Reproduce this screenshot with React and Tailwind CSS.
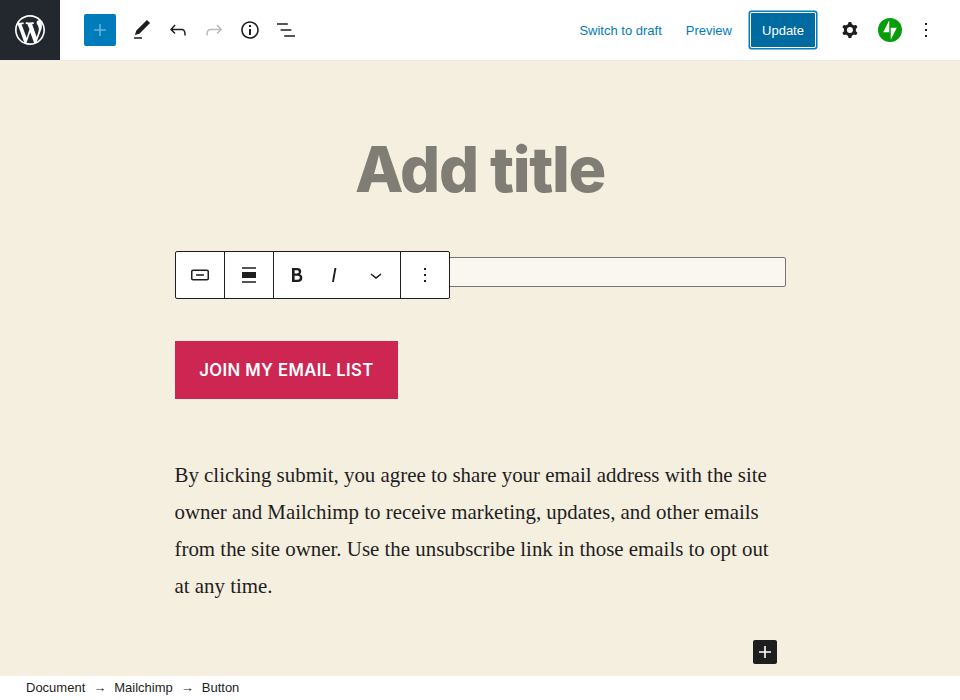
const ICONS = {
  wordpress:
    "M20 10c0-5.51-4.49-10-10-10C4.48 0 0 4.49 0 10c0 5.52 4.48 10 10 10 5.51 0 10-4.48 10-10zM7.78 15.37L4.37 6.22c.55-.02 1.17-.08 1.17-.08.5-.06.44-1.13-.06-1.11 0 0-1.45.11-2.37.11-.18 0-.37 0-.58-.01C4.12 2.69 6.87 1.11 10 1.11c2.33 0 4.45.87 6.05 2.34-.68-.11-1.65.39-1.65 1.58 0 .74.45 1.36.9 2.1.35.61.55 1.36.55 2.46 0 1.49-1.4 5-1.4 5l-3.03-8.37c.54-.02.82-.17.82-.17.5-.05.44-1.25-.06-1.22 0 0-1.44.12-2.38.12-.87 0-2.33-.12-2.33-.12-.5-.03-.56 1.2-.06 1.22l.92.08 1.26 3.41zM17.41 10c.24-.64.74-1.87.43-4.25.7 1.29 1.05 2.71 1.05 4.25 0 3.29-1.73 6.24-4.4 7.78.97-2.59 1.94-5.2 2.92-7.78zM6.1 18.09C3.12 16.65 1.11 13.53 1.11 10c0-1.3.23-2.48.72-3.59C3.25 10.3 4.67 14.2 6.1 18.09zm4.03-6.63l2.58 6.98c-.86.29-1.76.45-2.71.45-.79 0-1.57-.11-2.29-.33.81-2.38 1.62-4.74 2.42-7.10z",
  plus: "M18 11.2h-5.2V6h-1.6v5.2H6v1.6h5.2V18h1.6v-5.2H18z",
  edit: "M20.1 5.1L16.9 2 6.2 12.7l-1.3 4.4 4.5-1.3L20.1 5.1zM4 20.8h8v-1.5H4v1.5z",
  undo: "M18.3 11.7c-.6-.6-1.4-.9-2.3-.9H6.7l2.9-3.3-1.1-1-4.5 5L8.5 16l1-1-2.7-2.7H16c.5 0 .9.2 1.3.5 1 1 1 3.4 1 4.5v.3h1.5v-.2c0-1.5 0-4.3-1.5-5.7z",
  redo: "M15.6 6.5l-1.1 1 2.9 3.3H8c-.9 0-1.7.3-2.3.9-1.4 1.5-1.4 4.2-1.4 5.6v.2h1.5v-.3c0-1.1 0-3.5 1-4.5.3-.3.7-.5 1.3-.5h9.2L14.5 15l1.1 1.1 4.6-4.6-4.6-5z",
  info: "M12 3.2c-4.8 0-8.8 3.9-8.8 8.8 0 4.8 3.9 8.8 8.8 8.8 4.8 0 8.8-3.9 8.8-8.8 0-4.8-4-8.8-8.8-8.8zm0 16c-4 0-7.2-3.3-7.2-7.2C4.8 8 8 4.8 12 4.8s7.2 3.3 7.2 7.2c0 4-3.2 7.2-7.2 7.2zM11 17h2v-6h-2v6zm0-8h2V7h-2v2z",
  list: "M13.8 5.2H3v1.5h10.8V5.2zm-3.6 12v1.5H21v-1.5H10.2zm7.2-6H6.6v1.5h10.8v-1.5z",
  cog: "M10.289 4.836A1 1 0 0111.275 4h1.306a1 1 0 01.987.836l.244 1.466c.787.26 1.503.679 2.108 1.218l1.393-.522a1 1 0 011.216.437l.653 1.13a1 1 0 01-.23 1.273l-1.148.944a6.025 6.025 0 010 2.435l1.149.946a1 1 0 01.23 1.272l-.653 1.13a1 1 0 01-1.216.437l-1.394-.522c-.605.54-1.32.958-2.108 1.218l-.244 1.466a1 1 0 01-.987.836h-1.306a1 1 0 01-.986-.836l-.244-1.466a5.995 5.995 0 01-2.108-1.218l-1.394.522a1 1 0 01-1.217-.436l-.653-1.131a1 1 0 01.23-1.272l1.149-.946a6.026 6.026 0 010-2.435l-1.148-.944a1 1 0 01-.23-1.272l.653-1.131a1 1 0 011.217-.437l1.393.522a5.994 5.994 0 012.108-1.218l.244-1.466zM14.929 12a3 3 0 11-6 0 3 3 0 016 0z",
  more: "M13 19h-2v-2h2v2zm0-6h-2v-2h2v2zm0-6h-2V5h2v2z",
  button:
    "M19 6.5H5c-1.1 0-2 .9-2 2v7c0 1.1.9 2 2 2h14c1.1 0 2-.9 2-2v-7c0-1.1-.9-2-2-2zm.5 9c0 .3-.2.5-.5.5H5c-.3 0-.5-.2-.5-.5v-7c0-.3.2-.5.5-.5h14c.3 0 .5.2.5.5v7zM8 12.8h8v-1.5H8v1.5z",
  align: "M5 15h14V9H5v6zm0 4.8h14v-1.5H5v1.5zM5 4.2v1.5h14V4.2H5z",
  bold: "M14.7 11.3c1-.6 1.5-1.6 1.5-3 0-2.3-1.3-3.4-4-3.4H7v14h5.8c1.4 0 2.5-.3 3.3-1 .8-.7 1.2-1.7 1.2-2.9.1-1.9-.8-3.1-2.6-3.7zm-5.1-4h2.3c.6 0 1.1.1 1.4.4.3.3.5.7.5 1.2s-.2 1-.5 1.2c-.3.3-.8.4-1.4.4H9.6V7.3zm4.6 9c-.4.3-1 .4-1.7.4H9.6v-3.9h2.9c.7 0 1.3.2 1.7.5.4.3.6.8.6 1.5s-.2 1.2-.6 1.5z",
  italic: "M12.5 5L10 19h1.9l2.5-14z",
  chevron: "M17.5 11.6L12 16l-5.5-4.4.9-1.2L12 14l4.5-3.6 1 1.2z",
};

function Icon({ name, className = "size-6" }) {
  return (
    <svg viewBox="0 0 24 24" fill="currentColor" className={`shrink-0 ${className}`} aria-hidden="true">
      <path d={ICONS[name]} fillRule={name === "cog" ? "evenodd" : "nonzero"} />
    </svg>
  );
}

function IconButton({ name, label, className = "w-9" }) {
  return (
    <button aria-label={label} className={`flex h-9 shrink-0 items-center justify-center ${className}`}>
      <Icon name={name} />
    </button>
  );
}

function Header() {
  return (
    <header className="flex h-[60px] shrink-0 items-center bg-white">
      <a className="flex size-[60px] items-center justify-center bg-[#23282e] text-white">
        <svg viewBox="-2 -2 24 24" fill="currentColor" className="size-9" aria-hidden="true">
          <path d={ICONS.wordpress} />
        </svg>
      </a>
      <button aria-label="Add block" className="mr-2 ml-6 flex size-8 items-center justify-center rounded-[2px] bg-[#007cba] text-white/40">
        <Icon name="plus" />
      </button>
      <IconButton name="edit" label="Tools" />
      <IconButton name="undo" label="Undo" />
      <IconButton name="redo" label="Redo" className="w-9 text-[#1e1e1e]/30" />
      <IconButton name="info" label="Details" />
      <IconButton name="list" label="Block navigation" />

      <div className="ml-auto flex items-center pr-5 text-[13px] text-[#007cba]">
        <button className="mr-6 pt-0.5">Switch to draft</button>
        <button className="mr-[19px] pt-0.5">Preview</button>
        <button className="mr-[17px] h-[34px] w-16 rounded-[1px] bg-[#006ba1] pt-0.5 text-white shadow-[0_0_0_1px_#fff,0_0_0_2.5px_#007cba]">
          Update
        </button>
        <IconButton name="cog" label="Settings" className="w-9 text-[#1e1e1e]" />
        <button aria-label="Jetpack" className="mx-2.5 flex size-6 items-center justify-center">
          <svg viewBox="0 0 32 32" className="size-6" aria-hidden="true">
            <circle cx="16" cy="16" r="16" fill="#069e08" />
            <path d="M15 19H7l8-16zM17 29V13h8z" fill="#fff" />
          </svg>
        </button>
        <IconButton name="more" label="Options" className="w-7 text-[#1e1e1e]" />
      </div>
    </header>
  );
}

function BlockToolbar() {
  return (
    <div className="absolute -top-1.5 left-0 flex h-12 w-[275px] divide-x divide-[#1e1e1e] rounded-[2px] border border-[#1e1e1e] bg-white">
      <div className="flex w-[49px] items-center justify-center">
        <Icon name="button" />
      </div>
      <div className="flex w-[49px] items-center justify-center">
        <Icon name="align" />
      </div>
      <div className="flex w-[127px] items-center pl-[11px]">
        <Icon name="bold" />
        <Icon name="italic" className="ml-[13px] size-6" />
        <Icon name="chevron" className="ml-[18px] size-6" />
      </div>
      <div className="flex w-12 items-center justify-center">
        <Icon name="more" />
      </div>
    </div>
  );
}

export default function App() {
  return (
    <div className="flex h-[700px] w-[960px] flex-col overflow-hidden bg-[#f5efe0] font-['Liberation_Sans',Arial,sans-serif] text-[#1e1e1e]">
      <Header />
      <main className="flex min-h-0 flex-1 flex-col border-t border-[#edebe6] px-[175px]">
        <h1 className="mt-[68px] text-center font-['Inter',sans-serif] text-[63px] leading-[80px] font-extrabold tracking-[-1.4px] text-[#807d75]">
          Add title
        </h1>
        <div className="relative mt-12 h-[30px] w-[611px] rounded-[2px] border border-[#757575] bg-[#faf7f0]">
          <div className="absolute -top-px -left-px">
            <BlockToolbar />
          </div>
        </div>
        <button className="mt-[54px] h-[58px] w-[223px] shrink-0 bg-[#cd2653] pt-0.5 font-['Inter',sans-serif] text-[16.7px] font-semibold tracking-[0.4px] text-white">
          JOIN MY EMAIL LIST
        </button>
        <p className="mt-[58px] -ml-[0.5px] w-[611px] font-['Liberation_Serif',serif] text-[20.9px] leading-[37px] whitespace-nowrap">
          By clicking submit, you agree to share your email address with the site
          <br />
          owner and Mailchimp to receive marketing, updates, and other emails
          <br />
          from the site owner. Use the unsubscribe link in those emails to opt out
          <br />
          at any time.
        </p>
        <button aria-label="Add block" className="mt-[35px] mr-2 flex size-6 shrink-0 items-center justify-center self-end rounded-[2px] bg-[#1e1e1e] text-white">
          <Icon name="plus" />
        </button>
      </main>
      <footer className="flex h-6 shrink-0 items-center bg-white pl-[26px] text-[13px]">
        <span>Document</span>
        <span className="mx-2">→</span>
        <span>Mailchimp</span>
        <span className="mx-2">→</span>
        <span>Button</span>
      </footer>
    </div>
  );
}
